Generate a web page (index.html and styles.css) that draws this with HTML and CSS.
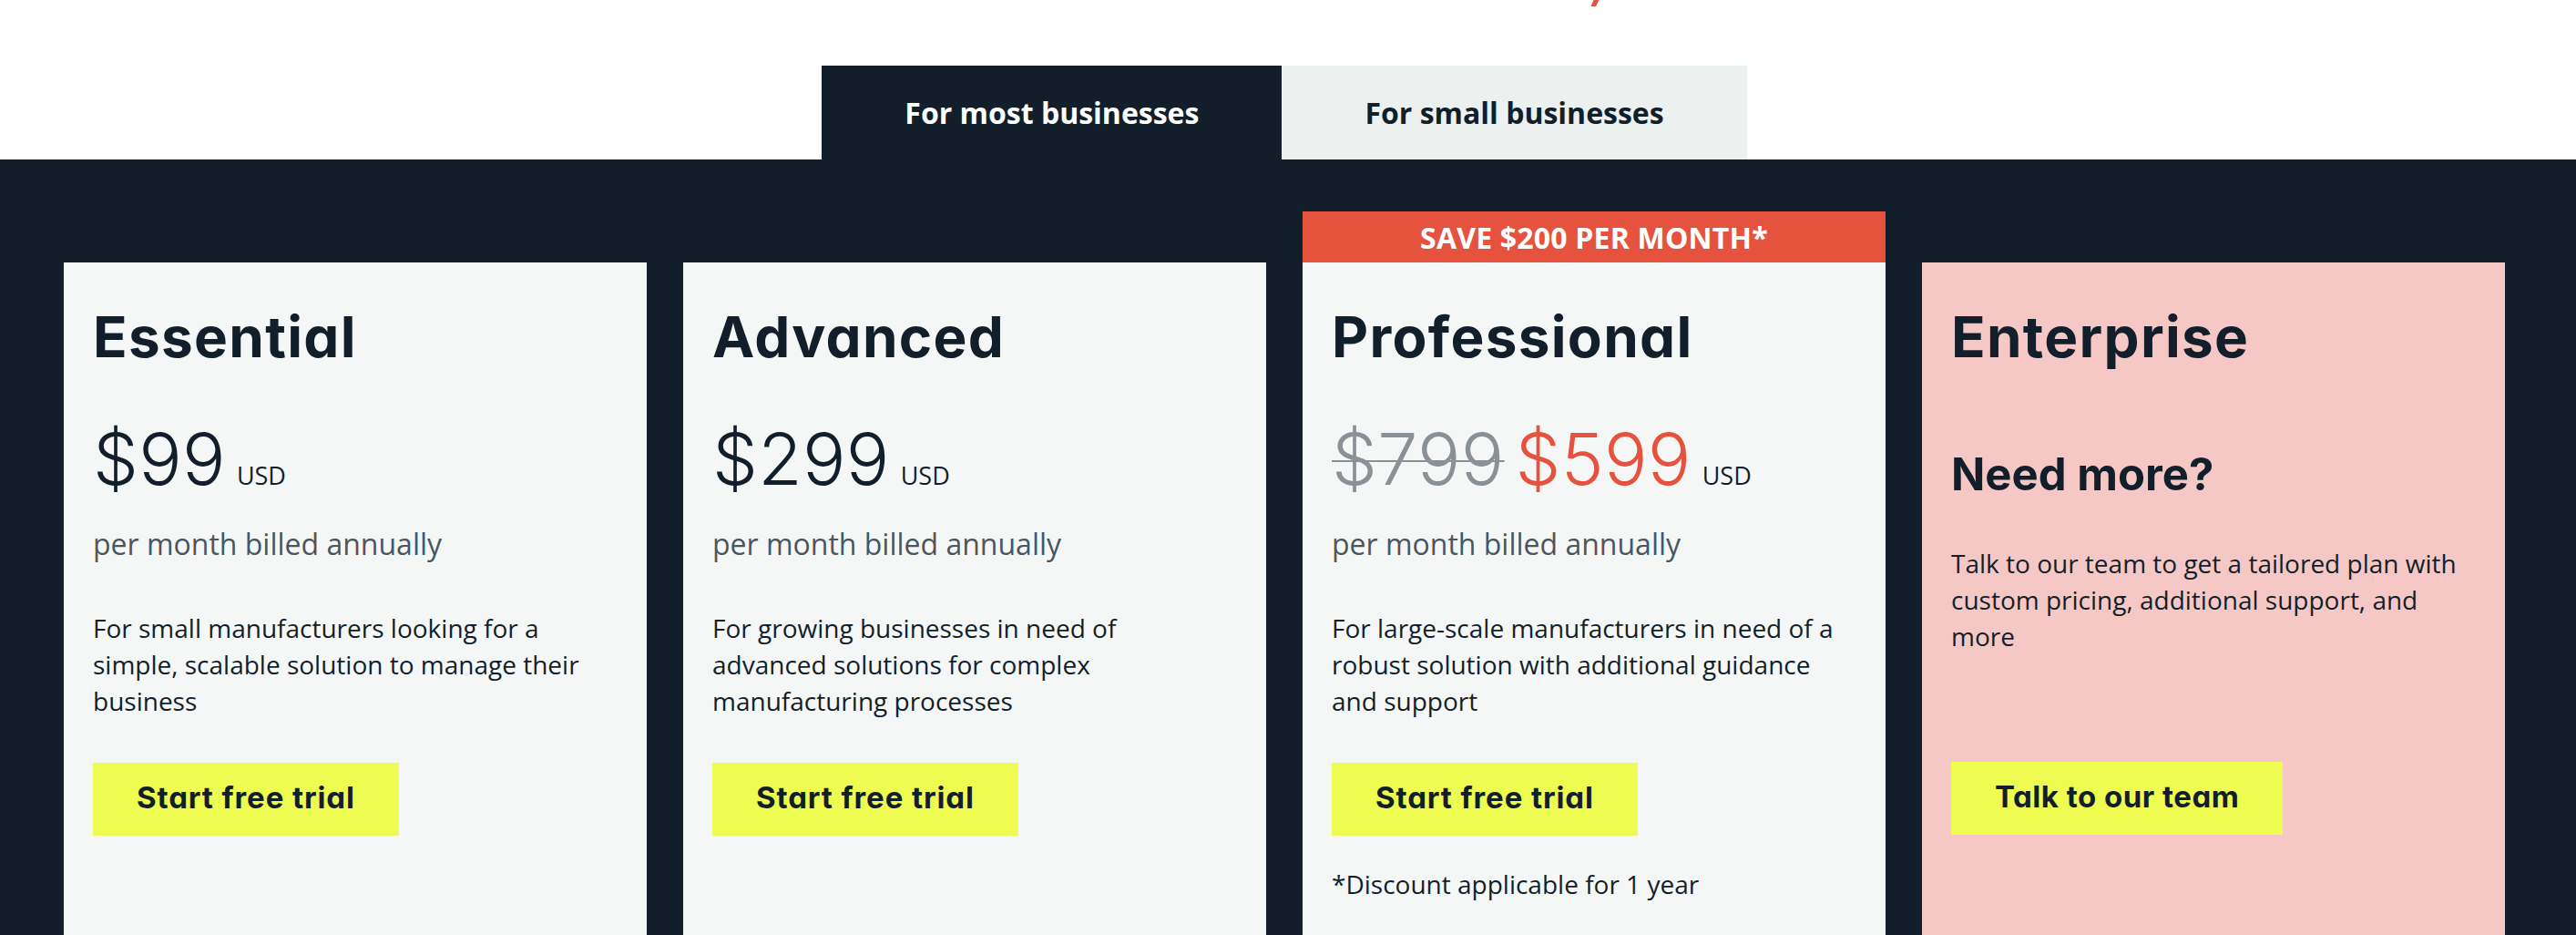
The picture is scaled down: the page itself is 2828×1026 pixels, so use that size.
FILE: index.html
```html
<!DOCTYPE html>
<html lang="en">
<head>
<meta charset="utf-8">
<title>Pricing</title>
<link rel="stylesheet" href="styles.css">
</head>
<body>
<header class="top">
  <svg class="tail" width="10" height="7" viewBox="0 0 10 7" aria-hidden="true"><path d="M3.5 0 H9.5 L6 7 H0.5 Z" fill="#e5533f"/></svg>
</header>
<nav class="tabs">
  <div class="tab tab-active">For most businesses</div>
  <div class="tab">For small businesses</div>
</nav>
<section class="pricing">
  <article class="card">
    <div class="card-body">
      <h2 class="plan">Essential</h2>
      <div class="price-row"><span class="price">$99</span><span class="usd">USD</span></div>
      <p class="per">per month billed annually</p>
      <p class="desc">For small manufacturers looking for a simple, scalable solution to manage their business</p>
      <a class="btn">Start free trial</a>
    </div>
  </article>
  <article class="card">
    <div class="card-body">
      <h2 class="plan">Advanced</h2>
      <div class="price-row"><span class="price">$299</span><span class="usd">USD</span></div>
      <p class="per">per month billed annually</p>
      <p class="desc">For growing businesses in need of advanced solutions for complex manufacturing processes</p>
      <a class="btn">Start free trial</a>
    </div>
  </article>
  <article class="card">
    <div class="banner">SAVE $200 PER MONTH*</div>
    <div class="card-body">
      <h2 class="plan">Professional</h2>
      <div class="price-row"><span class="price price-old">$799</span><span class="price price-new">$599</span><span class="usd">USD</span></div>
      <p class="per">per month billed annually</p>
      <p class="desc">For large-scale manufacturers in need of a robust solution with additional guidance and support</p>
      <a class="btn">Start free trial</a>
      <p class="note">*Discount applicable for 1 year</p>
    </div>
  </article>
  <article class="card card-enterprise">
    <div class="card-body">
      <h2 class="plan">Enterprise</h2>
      <h3 class="more">Need more?</h3>
      <p class="desc desc-ent">Talk to our team to get a tailored plan with custom pricing, additional support, and more</p>
      <a class="btn btn-ent">Talk to our team</a>
    </div>
  </article>
</section>
</body>
</html>
```

FILE: styles.css
```css
* { box-sizing: border-box; }

body {
  margin: 0;
  background: #ffffff;
  color: #121f2b;
  font-family: "Open Sans", "Noto Sans", sans-serif;
}

.top {
  height: 72px;
  display: flex;
  align-items: flex-start;
}

.tail {
  display: block;
  margin-left: 1746px;
}

.tabs {
  display: flex;
  justify-content: center;
  padding: 0 78px 0 70px;
}

.tab {
  height: 103px;
  padding: 0 91px;
  display: flex;
  align-items: center;
  background: #ecf0ef;
  color: #121f2b;
  font-family: "Open Sans", sans-serif;
  font-weight: 700;
  font-size: 32px;
  white-space: nowrap;
}

.tab-active {
  background: #121f2b;
  color: #ffffff;
}

.pricing {
  background: #121f2b;
  display: flex;
  align-items: flex-start;
  gap: 40px;
  padding: 113px 78px 0 70px;
  height: 851px;
  overflow: hidden;
}

.card {
  flex: 0 0 640px;
  min-height: 780px;
  background: #f5f7f7;
}

.card-enterprise {
  background: #f5c8c5;
}

.banner {
  margin-top: -56px;
  height: 56px;
  background: #e5533f;
  color: #ffffff;
  display: flex;
  align-items: center;
  justify-content: center;
  font-weight: 700;
  font-size: 32px;
  letter-spacing: 0.2px;
}

.card-body {
  padding: 44px 32px 40px 32px;
}

.plan {
  margin: 0;
  font-family: "Inter", "Liberation Sans", sans-serif;
  font-feature-settings: "cv11" 1;
  font-weight: 700;
  font-size: 62px;
  line-height: 75px;
  letter-spacing: 1.3px;
}

.price-row {
  margin-top: 57px;
  display: flex;
  align-items: baseline;
  gap: 12px;
  height: 78px;
}

.price {
  font-family: "Inter", "Liberation Sans", sans-serif;
  font-weight: 300;
  font-size: 79px;
  line-height: 78px;
  letter-spacing: 0.3px;
}

.price-old {
  color: #8a9196;
  text-decoration: line-through;
  text-decoration-thickness: 2px;
  text-decoration-color: #8a9196;
}

.price-new {
  color: #e5533f;
}

.usd {
  font-size: 27px;
  line-height: 30px;
}

.per {
  margin: 35px 0 0;
  font-size: 32px;
  line-height: 40px;
  color: #4a5662;
}

.desc {
  margin: 52px 0 0;
  font-size: 28px;
  line-height: 40px;
  color: #121f2b;
}

.btn {
  display: inline-flex;
  align-items: center;
  height: 80px;
  margin-top: 48px;
  padding: 0 48px 4px;
  background: #eefc52;
  color: #121f2b;
  font-family: "Inter", "Liberation Sans", sans-serif;
  font-feature-settings: "cv11" 1;
  font-weight: 700;
  font-size: 33px;
  letter-spacing: 0.9px;
  white-space: nowrap;
}

.btn-ent {
  margin-top: 118px;
  letter-spacing: 0.5px;
}

.note {
  margin: 33px 0 0;
  font-size: 28px;
  line-height: 40px;
}

.more {
  margin: 84px 0 0;
  font-family: "Inter", "Liberation Sans", sans-serif;
  font-weight: 700;
  font-size: 49px;
  line-height: 60px;
}

.desc-ent {
  margin-top: 47px;
}
```
